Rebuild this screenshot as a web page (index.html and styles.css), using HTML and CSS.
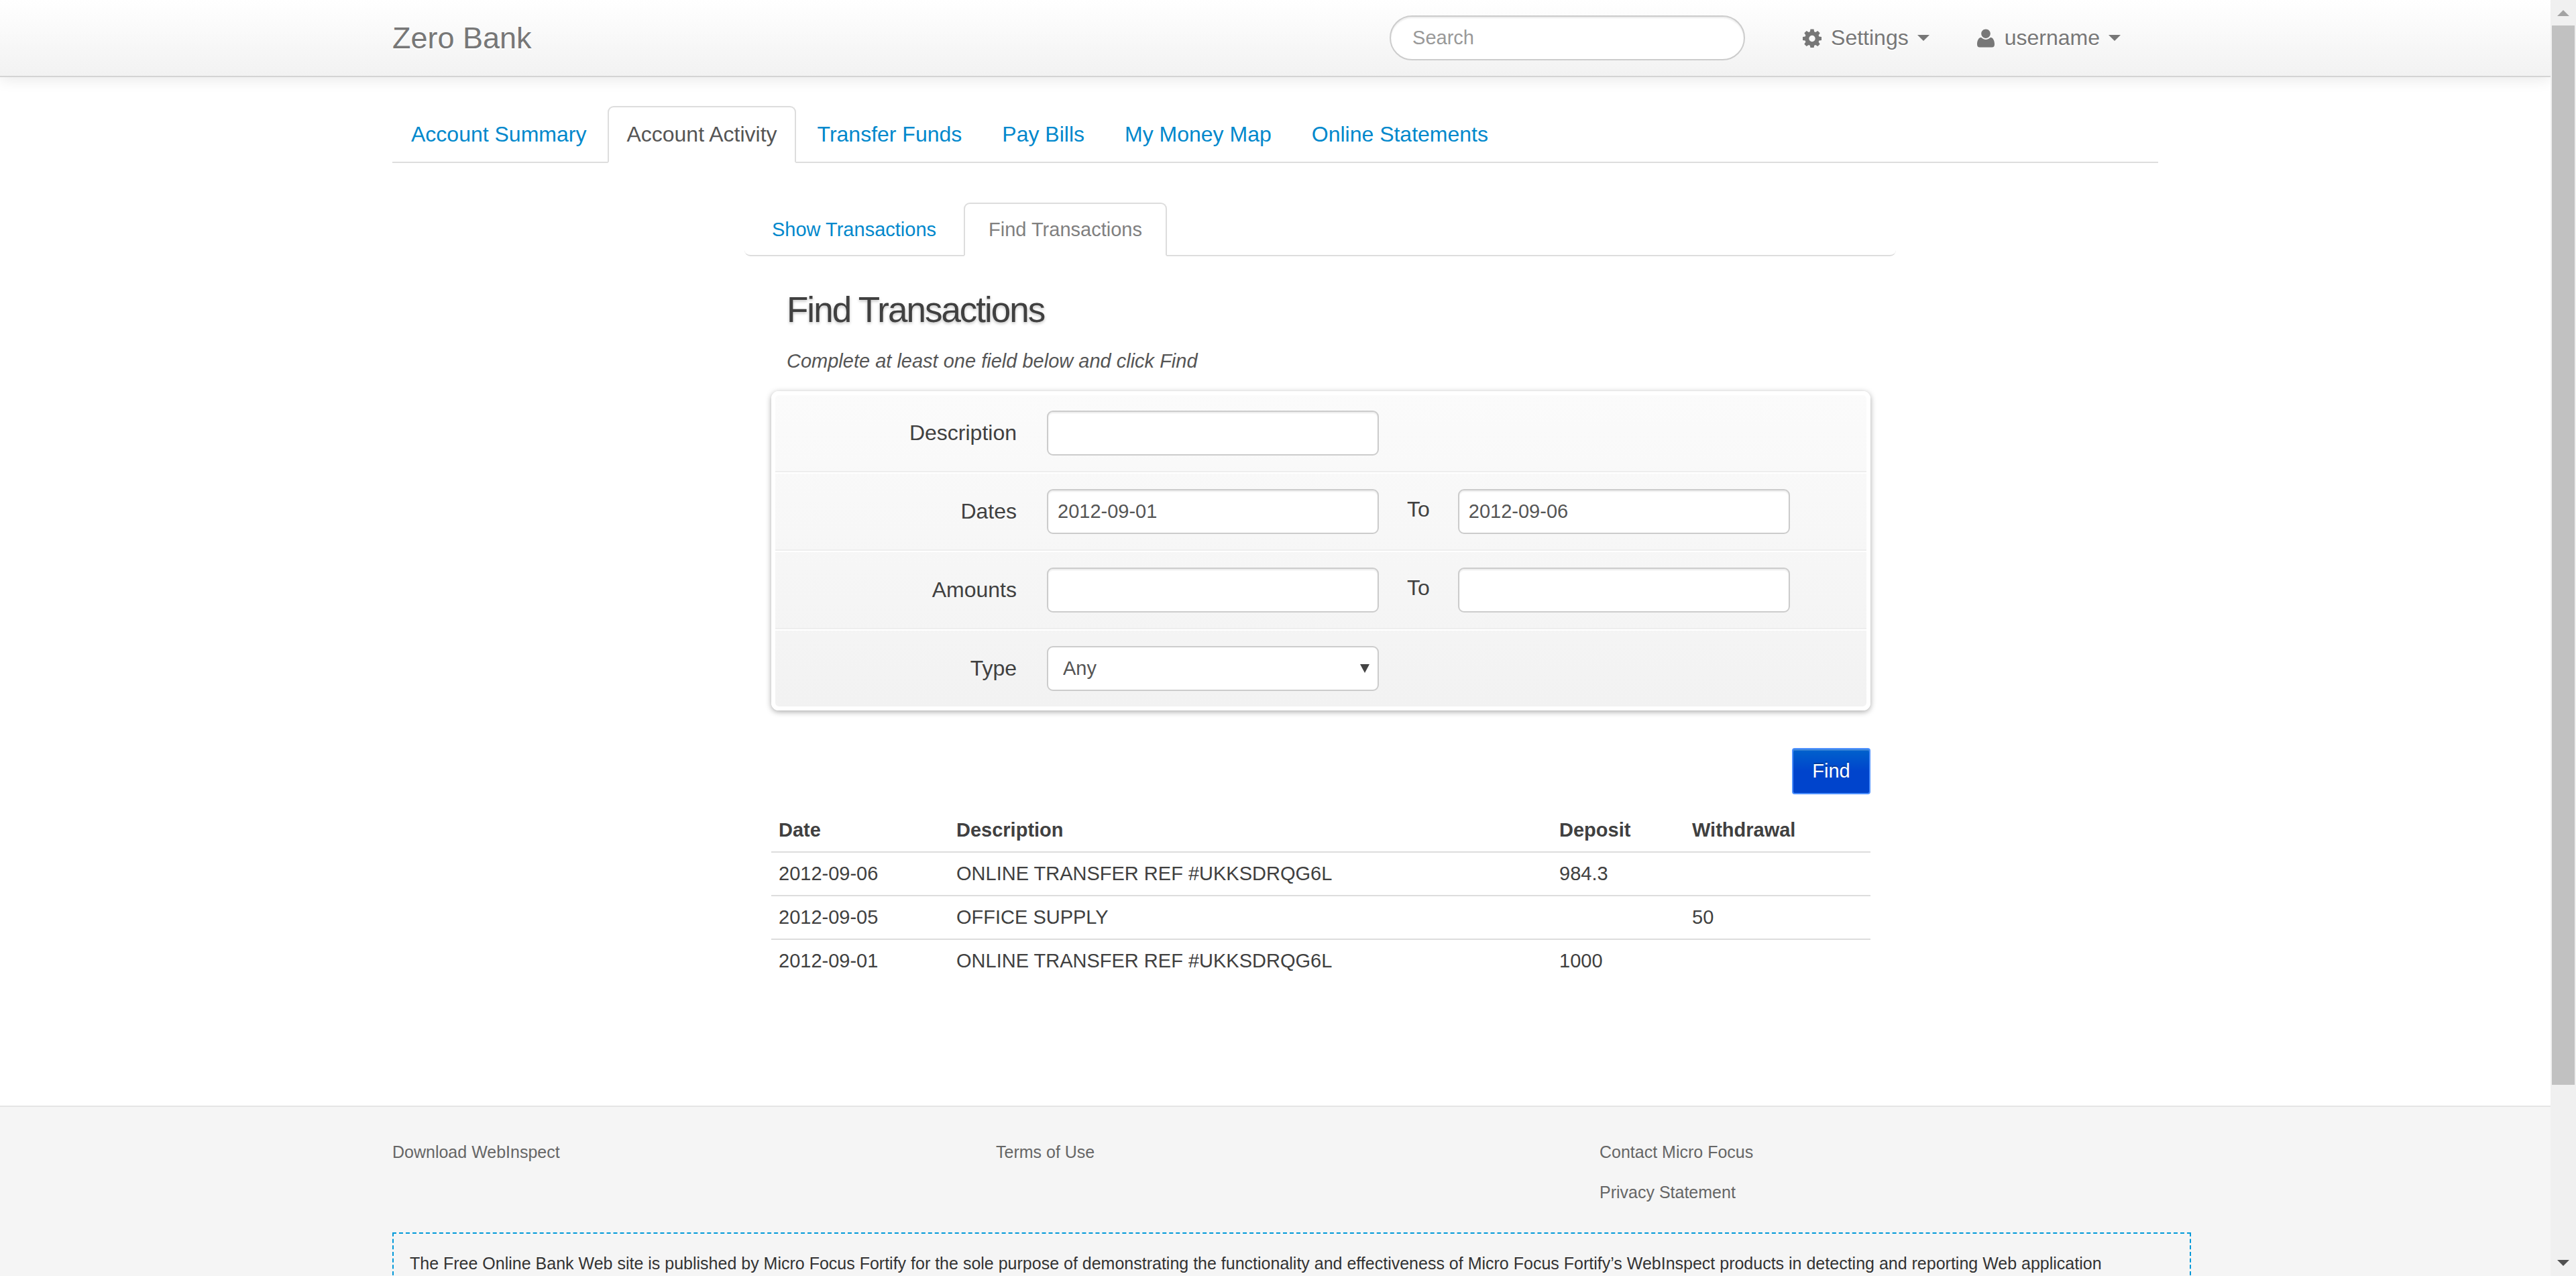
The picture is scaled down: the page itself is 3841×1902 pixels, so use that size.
FILE: index.html
```html
<!DOCTYPE html>
<html lang="en">
<head>
<meta charset="utf-8">
<title>Zero - Account Activity</title>
<link rel="stylesheet" href="styles.css">
</head>
<body>
<div class="window">
  <div class="page">
    <header class="navbar">
      <div class="container navbar-inner">
        <a class="brand" href="#">Zero Bank</a>
        <form class="search"><input type="search" placeholder="Search" aria-label="Search"></form>
        <nav class="user-menu">
          <a href="#"><svg class="icon" viewBox="0 0 28 28"><path fill-rule="evenodd" d="M11.500 0.500h5l.7 3.700 2 .8 3.100-2.100 3.400 3.400-2.100 3.100.8 2 3.600.6v4.900l-3.600.7-.8 2 2.100 3.100-3.400 3.400-3.100-2.100-2 .8-.7 3.600h-5l-.7-3.600-2-.8-3.100 2.100-3.400-3.400 2.100-3.100-.8-2-3.600-.7v-4.900l3.600-.6.8-2-2.100-3.100 3.400-3.400 3.100 2.100 2-.8zM14 9.800a4.700 4.700 0 1 0 0 9.400 4.700 4.700 0 0 0 0-9.400z"/></svg>Settings<span class="caret"></span></a>
          <a href="#"><svg class="icon" viewBox="0 0 28 28"><path d="M14 .5c3.900 0 6.800 2.900 6.800 6.600S18 14 14 14s-6.800-3.200-6.800-6.900S10.100.5 14 .5zM6.500 12.800c.5 0 1 .3 1.500.8 3.300 3.300 8.700 3.300 12 0 .5-.5 1-.8 1.500-.8 3.300.6 5.500 5 5.500 10.200 0 3-1.300 4.500-4 4.500H5c-2.700 0-4-1.500-4-4.500 0-5.200 2.200-9.600 5.500-10.200z"/></svg>username<span class="caret"></span></a>
        </nav>
      </div>
    </header>

    <main class="container">
      <nav class="tabs">
        <a href="#">Account Summary</a>
        <a class="active" href="#">Account Activity</a>
        <a href="#">Transfer Funds</a>
        <a href="#">Pay Bills</a>
        <a href="#">My Money Map</a>
        <a href="#">Online Statements</a>
      </nav>

      <section class="activity">
        <nav class="tabs subtabs">
          <a href="#">Show Transactions</a>
          <a class="active" href="#">Find Transactions</a>
        </nav>
        <div class="activity-body">
          <h2>Find Transactions</h2>
          <p class="hint">Complete at least one field below and click Find</p>
          <form>
            <div class="board">
              <div class="row">
                <label for="description">Description</label>
                <input id="description" type="text">
              </div>
              <div class="row">
                <label for="from-date">Dates</label>
                <input id="from-date" type="text" value="2012-09-01">
                <label class="to" for="to-date">To</label>
                <input id="to-date" type="text" value="2012-09-06">
              </div>
              <div class="row">
                <label for="from-amount">Amounts</label>
                <input id="from-amount" type="text">
                <label class="to" for="to-amount">To</label>
                <input id="to-amount" type="text">
              </div>
              <div class="row">
                <label for="type">Type</label>
                <div class="select">
                  <select id="type"><option>Any</option><option>Deposit</option><option>Withdrawal</option></select>
                </div>
              </div>
            </div>
            <div class="actions"><button type="submit">Find</button></div>
          </form>
          <table>
            <thead>
              <tr><th class="col-date">Date</th><th class="col-description">Description</th><th class="col-deposit">Deposit</th><th>Withdrawal</th></tr>
            </thead>
            <tbody>
              <tr><td>2012-09-06</td><td>ONLINE TRANSFER REF #UKKSDRQG6L</td><td>984.3</td><td></td></tr>
              <tr><td>2012-09-05</td><td>OFFICE SUPPLY</td><td></td><td>50</td></tr>
              <tr><td>2012-09-01</td><td>ONLINE TRANSFER REF #UKKSDRQG6L</td><td>1000</td><td></td></tr>
            </tbody>
          </table>
        </div>
      </section>
    </main>

    <footer>
      <div class="container">
        <div class="footer-links">
          <ul><li><a href="#">Download WebInspect</a></li></ul>
          <ul><li><a href="#">Terms of Use</a></li></ul>
          <ul><li><a href="#">Contact Micro Focus</a></li><li><a href="#">Privacy Statement</a></li></ul>
        </div>
        <p class="disclaimer">The Free Online Bank Web site is published by Micro Focus Fortify for the sole purpose of demonstrating the functionality and effectiveness of Micro Focus Fortify’s WebInspect products in detecting and reporting Web application</p>
      </div>
    </footer>
  </div>
  <div class="scrollbar" aria-hidden="true">
    <span class="arrow-up"></span>
    <span class="thumb"></span>
    <span class="arrow-down"></span>
  </div>
</div>
</body>
</html>
```
FILE: styles.css
```css
* { box-sizing: border-box; }

body {
  margin: 0;
  background: #fff;
  color: #404040;
  font: 29px/45px "Liberation Sans", Arial, sans-serif;
}

a { color: #0088cc; text-decoration: none; }

/* Scrolling window: the page and its scroll bar */
.window { display: flex; height: 100vh; }
.page { flex: 1; min-width: 0; overflow: hidden; }

.scrollbar {
  display: flex;
  flex-direction: column;
  align-items: center;
  width: 38px;
  padding: 15px 0;
  background: #f0f0f0;
}
.arrow-up, .arrow-down {
  border: 9px solid transparent;
}
.arrow-up { border-top: 0; border-bottom-color: #a3a3a3; }
.arrow-down { border-bottom: 0; border-top-color: #505050; margin-top: auto; }
.thumb { width: 34px; height: 83vh; margin-top: 14px; background: #c1c1c1; }

.container { max-width: 2633px; margin: 0 auto; }

/* Top bar */
.navbar {
  background: linear-gradient(#fff, #f2f2f2);
  border-bottom: 2px solid #d4d4d4;
  box-shadow: 0 2px 22px rgba(0, 0, 0, .1);
}
.navbar-inner {
  display: flex;
  align-items: center;
  height: 113px;
  padding-right: 56px;
}
.brand, .user-menu a { color: #777; text-shadow: 0 2px 0 #fff; }
.brand { font-size: 45px; margin-right: auto; }
.search input {
  width: 530px;
  border-radius: 34px;
  padding: 0 32px;
}
.search input::placeholder { color: #999; opacity: 1; }
.user-menu { display: flex; gap: 70px; margin-left: 86px; font-size: 32px; }
.user-menu a { display: flex; align-items: center; }
.icon { width: 28px; height: 28px; margin-right: 14px; fill: #777; }
.caret {
  margin-left: 13px;
  border: 9px solid transparent;
  border-top-color: #777;
  border-bottom: 0;
}

/* Tabs */
.tabs {
  display: flex;
  gap: 4px;
  margin-top: 43px;
  border-bottom: 2px solid #ddd;
  font-size: 32px;
}
.tabs a {
  padding: 18px 26px;
  margin-bottom: -2px;
  border: 2px solid transparent;
  border-radius: 9px 9px 0 0;
}
.tabs .active {
  color: #555;
  background: #fff;
  border-color: #ddd #ddd #fff;
}

/* Account activity */
.activity { margin: 59px 391px 0 525px; }
.subtabs {
  margin: 0;
  padding-left: 4px;
  border-radius: 0 0 9px 9px;
  font-size: 29px;
}
.subtabs a { padding: 16px 35px 15px; }
.subtabs .active { color: #808080; }
.activity-body { padding: 37px 38px 184px 40px; }

h2 {
  margin: 0;
  padding-left: 23px;
  font-size: 53px;
  font-weight: normal;
  line-height: 86px;
  letter-spacing: -2px;
  text-shadow: 0 2px 4px rgba(0, 0, 0, .25);
}
.hint {
  margin: 11px 0 22px;
  padding-left: 23px;
  color: #555;
  font-style: italic;
}

input, select {
  display: block;
  width: 495px;
  height: 67px;
  padding: 0 14px;
  border: 2px solid #ccc;
  border-radius: 9px;
  background: #fff;
  box-shadow: inset 0 2px 2px rgba(0, 0, 0, .075);
  color: #555;
  font: inherit;
  font-size: 29px;
}

.board {
  border: 6px solid #fff;
  border-radius: 11px;
  background: linear-gradient(#fbfbfb, #f2f2f2) padding-box;
  box-shadow: 0 2px 8px rgba(0, 0, 0, .35);
}
.row {
  display: flex;
  align-items: center;
  padding: 23px 0;
}
.row + .row {
  border-top: 2px solid #eee;
  box-shadow: inset 0 2px 0 #fff;
  padding-top: 25px;
}
.row label {
  width: 360px;
  margin-right: 45px;
  text-align: right;
  font-size: 32px;
}
.row .to {
  width: auto;
  margin: 0 42px;
  padding-bottom: 6px;
}

.select { position: relative; }
.select select {
  appearance: none;
  padding-left: 22px;
  box-shadow: none;
}
.select::after {
  content: "";
  position: absolute;
  top: 27px;
  right: 14px;
  border: 7px solid transparent;
  border-top: 13px solid #444;
  border-bottom: 0;
  pointer-events: none;
}

.actions { display: flex; justify-content: flex-end; margin: 56px 0 22px; }
button {
  width: 117px;
  height: 69px;
  padding: 0;
  border: 2px solid #4d90fe;
  border-radius: 4px;
  background: linear-gradient(#0062cc, #0044cc 50%);
  color: #fff;
  font: inherit;
  text-shadow: 0 -2px 0 rgba(0, 0, 0, .25);
  box-shadow: inset 0 2px 0 rgba(255, 255, 255, .2);
}

table { width: 100%; border-collapse: collapse; table-layout: fixed; }
th, td { padding: 9px 11px; text-align: left; line-height: 45px; }
td { border-top: 2px solid #ddd; }
.col-date { width: 265px; }
.col-description { width: 899px; }
.col-deposit { width: 198px; }

/* Footer */
footer {
  border-top: 2px solid #e5e5e5;
  background: #f5f5f5;
  font-size: 25px;
}
.footer-links { display: flex; padding: 45px 0 22px; }
.footer-links ul { flex: none; width: 900px; margin: 0; padding: 0; list-style: none; }
.footer-links li { padding: 0 0 15px; }
.footer-links a { color: #666; }
.disclaimer {
  margin: 0 -49px 0 0;
  padding: 22px 24px;
  border: 2px dashed #0099d9;
  color: #333;
}
```
